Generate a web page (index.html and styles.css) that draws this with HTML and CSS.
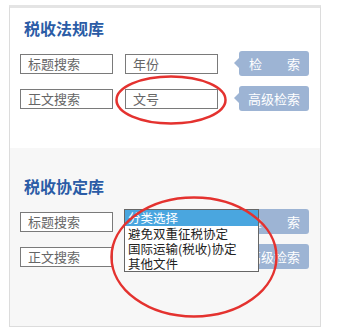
FILE: index.html
```html
<!DOCTYPE html>
<html lang="zh">
<head>
<meta charset="utf-8">
<link rel="stylesheet" href="styles.css">
</head>
<body>
<div class="panel">
  <section class="sec sec-laws">
    <h2 class="title">税收法规库</h2>
    <div class="row">
      <div class="field">标题搜索</div>
      <div class="field">年份</div>
      <div class="btn btn-spread"><span>检</span><span>索</span></div>
    </div>
    <div class="row">
      <div class="field">正文搜索</div>
      <div class="field">文号</div>
      <div class="btn">高级检索</div>
    </div>
  </section>
  <section class="sec sec-treaty">
    <h2 class="title">税收协定库</h2>
    <div class="row">
      <div class="field">标题搜索</div>
      <div class="select-wrap">
        <div class="field"></div>
        <ul class="options">
          <li class="opt sel">分类选择</li>
          <li class="opt">避免双重征税协定</li>
          <li class="opt">国际运输(税收)协定</li>
          <li class="opt">其他文件</li>
        </ul>
      </div>
      <div class="btn btn-spread"><span>检</span><span>索</span></div>
    </div>
    <div class="row">
      <div class="field">正文搜索</div>
      <div class="field"></div>
      <div class="btn">高级检索</div>
    </div>
  </section>
</div>
<svg class="marks" width="349" height="334" viewBox="0 0 349 334">
  <ellipse cx="171" cy="100" rx="54.5" ry="23.5" />
  <ellipse cx="194" cy="257" rx="82.5" ry="59.5" />
</svg>
</body>
</html>
```
FILE: styles.css
```css
html, body {
  margin: 0;
  padding: 0;
  background: #fff;
}
body {
  position: relative;
  width: 349px;
  height: 334px;
  padding: 5px 0 0 9px;
  box-sizing: border-box;
  font-family: "Noto Sans CJK SC", "Noto Sans", sans-serif;
}
.panel {
  width: 312px;
  border-top: 3px solid #e4e4e4;
  border-left: 1px solid #dcdcdc;
  border-right: 1px solid #dcdcdc;
  border-bottom: 1px solid #dcdcdc;
  box-sizing: border-box;
}
.sec {
  padding-left: 10px;
}
.sec-laws {
  background: #fff;
  padding-top: 10px;
  height: 140px;
  box-sizing: border-box;
}
.sec-treaty {
  background: #f7f7f7;
  padding-top: 28px;
  height: 178px;
  box-sizing: border-box;
}
.title {
  margin: 0 0 13px 4px;
  font-size: 16px;
  line-height: 20px;
  font-weight: bold;
  color: #2b5ca6;
}
.row {
  display: flex;
  align-items: center;
  height: 25px;
  margin-bottom: 10px;
}
.field {
  width: 93px;
  height: 20px;
  box-sizing: border-box;
  border: 1px solid #7a7a7a;
  background: #fff;
  font-size: 13px;
  line-height: 18px;
  color: #666;
  padding-left: 7px;
  margin-right: 12px;
}
.select-wrap {
  position: relative;
}
.btn {
  position: relative;
  margin-left: 9px;
  width: 70px;
  height: 25px;
  box-sizing: border-box;
  background: #9db4d4;
  border-radius: 3px;
  color: #fff;
  font-size: 13px;
  line-height: 25px;
  text-align: center;
}
.btn::before {
  content: "";
  position: absolute;
  left: -5px;
  top: 7px;
  border-top: 5px solid transparent;
  border-bottom: 5px solid transparent;
  border-right: 5px solid #9db4d4;
}
.btn-spread {
  display: flex;
  justify-content: space-between;
  padding: 0 9px 0 10px;
}
.options {
  position: absolute;
  left: -1px;
  top: -3px;
  width: 135px;
  margin: 0;
  padding: 0;
  list-style: none;
  border: 1px solid #666;
  background: #fff;
  box-sizing: border-box;
  z-index: 2;
}
.opt {
  font-size: 12.5px;
  line-height: 15px;
  height: 15px;
  padding-left: 3px;
  color: #222;
  white-space: nowrap;
}
.opt.sel {
  background: #4aa6df;
  color: #fff;
  height: 16px;
  line-height: 16px;
}
.marks {
  position: absolute;
  left: 0;
  top: 0;
  pointer-events: none;
  z-index: 3;
}
.marks ellipse {
  fill: none;
  stroke: #e4322f;
  stroke-width: 2.5;
}
```
